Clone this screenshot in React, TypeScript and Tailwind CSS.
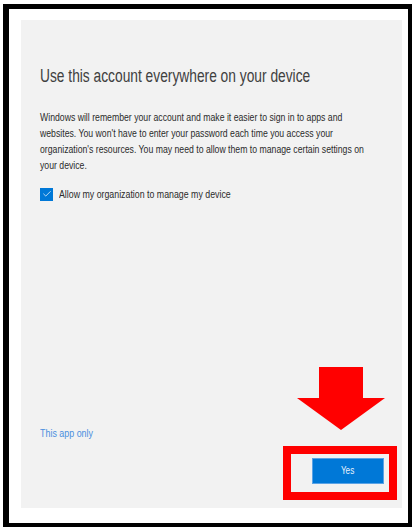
import { Check } from 'lucide-react';

const font = { fontFamily: '"Liberation Sans", Arial, sans-serif' };

function DownArrow() {
  return (
    <svg
      className="absolute left-[288px] top-[358px]"
      width="90"
      height="64"
      viewBox="0 0 90 64"
    >
      <polygon points="22,0 66,0 66,31 88,31 44,63 0,31 22,31" fill="#ff0000" />
    </svg>
  );
}

export default function App() {
  return (
    <div className="w-[412px] h-[527px] bg-white pt-[4px] pl-[3px]" style={font}>
      <div className="relative w-[409px] h-[523px] border-black border-l-[6px] border-t-[5px] border-r-[4px] border-b-[4px] bg-white pl-[12px] pt-[11px]">
        <div className="flex flex-col items-start w-[381px] h-[488px] bg-[#f2f2f2] pl-[19px] pr-[18px] pt-[44px] pb-[24px]">
          <h1 className="shrink-0 w-[360px] whitespace-nowrap origin-left scale-x-[0.765] text-[18px] leading-[24px] text-[#404040]">
            Use this account everywhere on your device
          </h1>
          <p className="shrink-0 w-[412px] mt-[21px] origin-left scale-x-[0.79] text-[11px] leading-[16px] text-[#2b2b2b]">
            Windows will remember your account and make it easier to sign in to apps and websites. You won't have to
            enter your password each time you access your organization's resources. You may need to allow them to
            manage certain settings on your device.
          </p>
          <label className="mt-[13px] flex items-center gap-[6px] text-[11px] leading-[16px] text-[#2b2b2b]">
            <span className="flex items-center justify-center w-[13px] h-[13px] bg-[#0078d7]">
              <Check className="w-[10px] h-[10px] text-white" strokeWidth={1.75} />
            </span>
            <span className="whitespace-nowrap origin-left scale-x-[0.8]">Allow my organization to manage my device</span>
          </label>
          <div className="flex-1" />
          <a className="whitespace-nowrap origin-left scale-x-[0.81] text-[11px] leading-[16px] text-[#4a8fdf]">
            This app only
          </a>
          <div className="mt-[17px] flex justify-end self-stretch">
            <button className="w-[72px] h-[26px] bg-[#0078d7] border border-[#5aa3e6] text-[#e8f2fc] text-[10.5px]">
              <span className="inline-block scale-x-[0.78]">Yes</span>
            </button>
          </div>
        </div>
        <DownArrow />
        <div className="absolute left-[274px] top-[437px] w-[114px] h-[54px] border-[8px] border-[#ff0000]" />
      </div>
    </div>
  );
}
